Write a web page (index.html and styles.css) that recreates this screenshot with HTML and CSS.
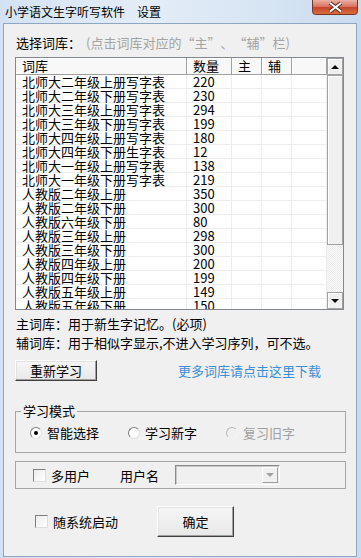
FILE: index.html
```html
<!DOCTYPE html>
<html lang="zh-CN">
<head>
<meta charset="UTF-8">
<title>小学语文生字听写软件</title>
<link rel="stylesheet" href="styles.css">
</head>
<body>
<div class="window">
  <div class="titlebar">
    <span class="title">小学语文生字听写软件</span>
    <span class="menu">设置</span>
    <div class="close-btn">
      <svg width="46" height="15" viewBox="0 0 46 15">
        <defs>
          <linearGradient id="closeGrad" x1="0" y1="0" x2="0" y2="1">
            <stop offset="0" stop-color="#eab0a4"/>
            <stop offset="0.45" stop-color="#d9735f"/>
            <stop offset="0.5" stop-color="#c5442c"/>
            <stop offset="1" stop-color="#d9703f"/>
          </linearGradient>
        </defs>
        <path d="M0.5 0 V11.5 a3 3 0 0 0 3 3 H42.5 a3 3 0 0 0 3 -3 V0" fill="url(#closeGrad)" stroke="#7a3328"/>
        <path d="M18 3 L29 11.5 M29 3 L18 11.5" stroke="#5e2a22" stroke-width="4"/>
        <path d="M18 3 L29 11.5 M29 3 L18 11.5" stroke="#fff" stroke-width="2"/>
      </svg>
    </div>
  </div>

  <div class="client">
    <div class="pick-row">选择词库：<span class="hint">(点击词库对应的<span class="qo">“</span>主<span class="qc">”</span>、<span class="qo">“</span>辅<span class="qc">”</span>栏)</span></div>

    <div class="listview">
      <div class="lv-main">
        <div class="lv-head">
          <span>词库</span><span>数量</span><span>主</span><span>辅</span><span></span>
        </div>
        <div class="lv-row"><span>北师大二年级上册写字表</span><span>220</span><span></span><span></span><span></span></div>
        <div class="lv-row"><span>北师大二年级下册写字表</span><span>230</span><span></span><span></span><span></span></div>
        <div class="lv-row"><span>北师大三年级上册写字表</span><span>294</span><span></span><span></span><span></span></div>
        <div class="lv-row"><span>北师大三年级下册写字表</span><span>199</span><span></span><span></span><span></span></div>
        <div class="lv-row"><span>北师大四年级上册写字表</span><span>180</span><span></span><span></span><span></span></div>
        <div class="lv-row"><span>北师大四年级下册生字表</span><span>12</span><span></span><span></span><span></span></div>
        <div class="lv-row"><span>北师大一年级上册写字表</span><span>138</span><span></span><span></span><span></span></div>
        <div class="lv-row"><span>北师大一年级下册写字表</span><span>219</span><span></span><span></span><span></span></div>
        <div class="lv-row"><span>人教版二年级上册</span><span>350</span><span></span><span></span><span></span></div>
        <div class="lv-row"><span>人教版二年级下册</span><span>300</span><span></span><span></span><span></span></div>
        <div class="lv-row"><span>人教版六年级下册</span><span>80</span><span></span><span></span><span></span></div>
        <div class="lv-row"><span>人教版三年级上册</span><span>298</span><span></span><span></span><span></span></div>
        <div class="lv-row"><span>人教版三年级下册</span><span>300</span><span></span><span></span><span></span></div>
        <div class="lv-row"><span>人教版四年级上册</span><span>200</span><span></span><span></span><span></span></div>
        <div class="lv-row"><span>人教版四年级下册</span><span>199</span><span></span><span></span><span></span></div>
        <div class="lv-row"><span>人教版五年级上册</span><span>149</span><span></span><span></span><span></span></div>
        <div class="lv-row"><span>人教版五年级下册</span><span>150</span><span></span><span></span><span></span></div>
      </div>
      <div class="lv-scroll">
        <div class="sb-btn"><span class="arrow-up"></span></div>
        <div class="sb-thumb"></div>
        <div class="sb-track"></div>
        <div class="sb-btn"><span class="arrow-down"></span></div>
      </div>
    </div>

    <p class="note first">主词库：用于新生字记忆。(必项)</p>
    <p class="note">辅词库：用于相似字显示,不进入学习序列，可不选。</p>

    <div class="action-row">
      <button class="btn btn-relearn" type="button">重新学习</button>
      <a class="download-link" href="#">更多词库请点击这里下载</a>
    </div>

    <fieldset class="group mode-group">
      <legend>学习模式</legend>
      <div class="radio-row">
        <label class="radio-item"><span class="radio checked"></span>智能选择</label>
        <label class="radio-item"><span class="radio"></span>学习新字</label>
        <label class="radio-item disabled"><span class="radio"></span>复习旧字</label>
      </div>
    </fieldset>

    <div class="group user-group">
      <span class="checkbox"></span><span>多用户</span>
      <span class="user-label">用户名</span>
      <div class="combo"><span class="combo-btn"><span class="arrow-down grey"></span></span></div>
    </div>

    <div class="bottom-row">
      <span class="checkbox"></span><span>随系统启动</span>
      <button class="btn btn-ok" type="button">确定</button>
    </div>
  </div>
</div>
</body>
</html>
```

FILE: styles.css
```css
* {
  box-sizing: border-box;
}
body {
  margin: 0;
  width: 361px;
  height: 558px;
  overflow: hidden;
  font-family: "Noto Sans CJK SC", sans-serif;
  font-size: 13px;
  color: #000;
}
.window {
  height: 558px;
  padding: 0 4px 1px 3px;
  display: flex;
  flex-direction: column;
  background: linear-gradient(to right, #d3e2f3, #e4edf8 40%, #d6e4f3 75%, #c9dbef);
}
.titlebar {
  height: 23px;
  display: flex;
  align-items: flex-start;
  font-size: 12px;
}
.title {
  margin-left: 2px;
  line-height: 23px;
}
.menu {
  margin-left: 12px;
  line-height: 23px;
}
.close-btn {
  margin-left: auto;
  margin-right: -1px;
  height: 15px;
}
.close-btn svg {
  display: block;
}
.client {
  flex: 1;
  border: 1px solid #8ea6c2;
  background: #f0f0f0;
  padding: 11px 0 0 11px;
}
.pick-row {
  line-height: 16px;
  padding-left: 1px;
  margin-bottom: 6px;
}
.hint {
  color: #a3a3a3;
  margin-left: 5px;
}
.qo,
.qc {
  display: inline-block;
  width: 13px;
}
.qo {
  text-align: right;
}
.qc {
  text-align: left;
}

/* list view */
.listview {
  width: 329px;
  height: 253px;
  border: 1px solid #828790;
  background: #fff;
  display: flex;
}
.lv-main {
  width: 311px;
  overflow: hidden;
}
.lv-head,
.lv-row {
  display: grid;
  grid-template-columns: 171px 45px 30px 30px 35px;
}
.lv-head {
  height: 17px;
}
.lv-head span {
  border-right: 1px solid #a0a0a0;
  border-bottom: 1px solid #a0a0a0;
  box-shadow: inset 1px 1px #fff;
  background: #f8f8f8;
  padding-left: 6px;
  line-height: 16px;
}
.lv-row {
  height: 14px;
}
.lv-row span {
  border-right: 1px solid #ededed;
  border-bottom: 1px solid #ededed;
  padding-left: 6px;
  line-height: 13px;
  white-space: nowrap;
}
.lv-scroll {
  width: 16px;
  display: flex;
  flex-direction: column;
  background: repeating-conic-gradient(#ececec 0 25%, #fafafa 0 50%) 0 0 / 2px 2px;
}
.sb-btn,
.sb-thumb {
  border: 1px solid #a2a2a2;
  background: #f0f0f0;
  box-shadow: inset 1px 1px #fff;
}
.sb-btn {
  height: 17px;
  display: flex;
  align-items: center;
  justify-content: center;
}
.sb-thumb {
  height: 170px;
}
.sb-track {
  flex: 1;
}
.arrow-up {
  width: 0;
  height: 0;
  border-left: 4px solid transparent;
  border-right: 4px solid transparent;
  border-bottom: 4px solid #000;
}
.arrow-down {
  width: 0;
  height: 0;
  border-left: 4px solid transparent;
  border-right: 4px solid transparent;
  border-top: 4px solid #000;
}
.arrow-down.grey {
  border-top-color: #a0a0a0;
}

/* notes and actions */
.note {
  margin: 0;
  padding-left: 1px;
  line-height: 19px;
}
.note.first {
  margin-top: 4px;
}
.action-row {
  display: flex;
  align-items: center;
  margin-top: 8px;
}
.btn {
  font: inherit;
  color: #000;
  padding: 0;
  background: linear-gradient(#f6f6f6, #e8e8e8);
  border: 1px solid;
  border-color: #fff #404040 #404040 #fff;
  box-shadow: inset -1px -1px #a0a0a0, inset 1px 1px #e3e3e3;
}
.btn-relearn {
  width: 82px;
  height: 21px;
  line-height: 18px;
}
.download-link {
  margin-left: 81px;
  color: #3b8fd9;
  text-decoration: none;
  line-height: 16px;
}

/* groups */
.group {
  width: 331px;
  border: 1px solid #a6a6a6;
}
.mode-group {
  margin: 22px 0 0 0;
  padding: 0 0 11px 0;
  min-width: 0;
}
.mode-group legend {
  margin-left: 5px;
  padding: 0 2px;
  line-height: 16px;
}
.radio-row {
  display: flex;
  gap: 29px;
  padding: 6px 0 0 14px;
  line-height: 16px;
}
.radio-item {
  display: flex;
  align-items: center;
}
.radio-item.disabled {
  color: #a0a0a0;
}
.radio {
  width: 12px;
  height: 12px;
  margin-right: 5px;
  border-radius: 50%;
  border: 1px solid;
  border-color: #7d7d7d #e2e2e2 #e2e2e2 #7d7d7d;
  background: #fff;
  display: flex;
  align-items: center;
  justify-content: center;
}
.radio.checked::after {
  content: "";
  width: 4px;
  height: 4px;
  border-radius: 50%;
  background: #000;
}
.disabled .radio {
  background: #f0f0f0;
  border-color: #b8b8b8 #f4f4f4 #f4f4f4 #b8b8b8;
}
.user-group {
  margin-top: 8px;
  height: 28px;
  display: flex;
  align-items: center;
  padding-left: 17px;
}
.checkbox {
  width: 13px;
  height: 13px;
  margin-right: 5px;
  border: 1px solid;
  border-color: #808080 #dedede #dedede #808080;
  background: linear-gradient(135deg, #ececec, #fff);
}
.user-label {
  margin-left: 30px;
}
.combo {
  margin-left: 16px;
  width: 105px;
  height: 20px;
  border: 1px solid;
  border-color: #8a8a8a #fff #fff #8a8a8a;
  box-shadow: inset 1px 1px #c8c8c8;
  background: #f0f0f0;
  display: flex;
  justify-content: flex-end;
  padding: 1px;
}
.combo-btn {
  width: 16px;
  border: 1px solid;
  border-color: #fff #a0a0a0 #a0a0a0 #fff;
  background: #f0f0f0;
  display: flex;
  align-items: center;
  justify-content: center;
}
.bottom-row {
  margin-top: 17px;
  display: flex;
  align-items: center;
  padding-left: 20px;
}
.btn-ok {
  width: 77px;
  height: 31px;
  margin-left: 39px;
}
```
